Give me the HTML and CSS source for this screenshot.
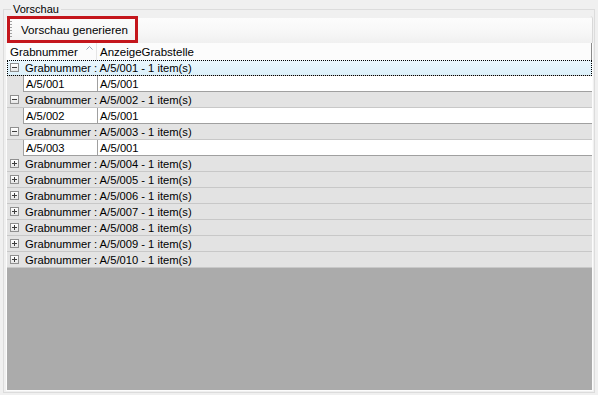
FILE: index.html
```html
<!DOCTYPE html>
<html>
<head>
    <title>Vorschau</title>
    <link rel="stylesheet" href="styles.css">
</head>
<body>
    <fieldset class="group-box">
        <legend>Vorschau</legend>
        <div class="toolbar">
            <div class="highlight">
                <span class="grip"></span>
                <button class="tool-button">Vorschau generieren</button>
            </div>
        </div>
        <div class="grid">
            <div class="grid-header">
                <div class="head-cell col-1">
                    <span>Grabnummer</span>
                    <svg class="sort" width="7" height="4" viewBox="0 0 7 4"><path d="M0.5 3.5 L3.5 0.5 L6.5 3.5" fill="none" stroke="#97a4b4" stroke-width="1"/></svg>
                </div>
                <div class="head-cell col-2">AnzeigeGrabstelle</div>
            </div>
            <div class="group-row selected"><span class="toggle minus"></span>Grabnummer : A/5/001 - 1 item(s)</div>
            <div class="data-row"><div class="cell col-1">A/5/001</div><div class="cell col-2">A/5/001</div></div>
            <div class="group-row"><span class="toggle minus"></span>Grabnummer : A/5/002 - 1 item(s)</div>
            <div class="data-row"><div class="cell col-1">A/5/002</div><div class="cell col-2">A/5/001</div></div>
            <div class="group-row"><span class="toggle minus"></span>Grabnummer : A/5/003 - 1 item(s)</div>
            <div class="data-row"><div class="cell col-1">A/5/003</div><div class="cell col-2">A/5/001</div></div>
            <div class="group-row"><span class="toggle plus"></span>Grabnummer : A/5/004 - 1 item(s)</div>
            <div class="group-row"><span class="toggle plus"></span>Grabnummer : A/5/005 - 1 item(s)</div>
            <div class="group-row"><span class="toggle plus"></span>Grabnummer : A/5/006 - 1 item(s)</div>
            <div class="group-row"><span class="toggle plus"></span>Grabnummer : A/5/007 - 1 item(s)</div>
            <div class="group-row"><span class="toggle plus"></span>Grabnummer : A/5/008 - 1 item(s)</div>
            <div class="group-row"><span class="toggle plus"></span>Grabnummer : A/5/009 - 1 item(s)</div>
            <div class="group-row"><span class="toggle plus"></span>Grabnummer : A/5/010 - 1 item(s)</div>
            <div class="grid-empty"></div>
        </div>
    </fieldset>
</body>
</html>
```

FILE: styles.css
```css
html, body {
    margin: 0;
    height: 395px;
}
body {
    box-sizing: border-box;
    padding: 3px 3px 2px 3px;
    background: #f0f0f0;
    color: #000;
    font-family: "Liberation Sans", Arial, sans-serif;
    font-size: 11.2px;
    display: flex;
    flex-direction: column;
}
.group-box {
    flex: 1;
    margin: 0;
    padding: 0 1px 1px 2px;
    border: 1px solid #dcdcdc;
    min-width: 0;
    display: flex;
    flex-direction: column;
}
.group-box legend {
    margin-left: 5px;
    padding: 0 2px;
    font-size: 11px;
    line-height: 13px;
    color: #000;
}
.toolbar {
    height: 27px;
    display: flex;
    align-items: stretch;
    background: linear-gradient(#f0f0f0 0, #f0f0f0 2px, #fcfcfc 2px, #f7f7f7 60%, #f0f0f0 100%);
    border-right: 1px solid #d8d8d8;
    border-top-right-radius: 3px;
}
.highlight {
    margin-left: 1px;
    width: 125px;
    border: 3px solid #c4161c;
    display: flex;
    align-items: center;
}
.grip {
    width: 2px;
    height: 17px;
    background: repeating-linear-gradient(#a0a0a0 0, #a0a0a0 1px, transparent 1px, transparent 3px);
}
.tool-button {
    background: none;
    border: none;
    padding: 0 0 0 9px;
    font-family: "Liberation Sans", Arial, sans-serif;
    font-size: 11.6px;
    color: #000;
    white-space: nowrap;
}
.grid {
    flex: 1;
    display: flex;
    flex-direction: column;
    border: 1px solid #fcfcfc;
    border-top: none;
}
.grid-header {
    height: 17px;
    display: flex;
    background: #fcfcfc;
    border-right: 1px solid #8a8a8a;
}
.head-cell {
    display: flex;
    align-items: center;
    padding-left: 3px;
    font-size: 11.5px;
}
.head-cell.col-1 {
    width: 90px;
    box-sizing: border-box;
    border-right: 1px solid #e5e5e5;
    justify-content: space-between;
    padding-right: 3px;
}
.sort {
    margin-top: -7px;
}
.group-row {
    height: 16px;
    box-sizing: border-box;
    display: flex;
    align-items: center;
    background: #e3e3e3;
    border-bottom: 1px solid #c8c8c8;
    padding-left: 3px;
    white-space: nowrap;
}
.group-row.selected {
    background: linear-gradient(#e9f6fd, #dcf0fa);
    outline: 1px dotted #000;
    outline-offset: -1px;
}
.toggle {
    width: 9px;
    height: 9px;
    box-sizing: border-box;
    border: 1px solid #8f8f8f;
    background: linear-gradient(#ffffff, #e6e6e6);
    margin-right: 6px;
    position: relative;
}
.toggle::before, .plus::after {
    content: "";
    position: absolute;
    background: #3c3c3c;
}
.toggle::before {
    left: 1px;
    top: 3px;
    width: 5px;
    height: 1px;
}
.plus::after {
    left: 3px;
    top: 1px;
    width: 1px;
    height: 5px;
}
.data-row {
    height: 16px;
    box-sizing: border-box;
    display: flex;
    background: #e3e3e3;
    padding-left: 16px;
}
.cell {
    box-sizing: border-box;
    background: #fff;
    border-left: 1px solid #a0a0a0;
    border-bottom: 1px solid #a0a0a0;
    padding-left: 2px;
    display: flex;
    align-items: center;
}
.cell.col-1 {
    width: 74px;
}
.cell.col-2 {
    flex: 1;
}
.grid-empty {
    flex: 1;
    background: #ababab;
}
```
